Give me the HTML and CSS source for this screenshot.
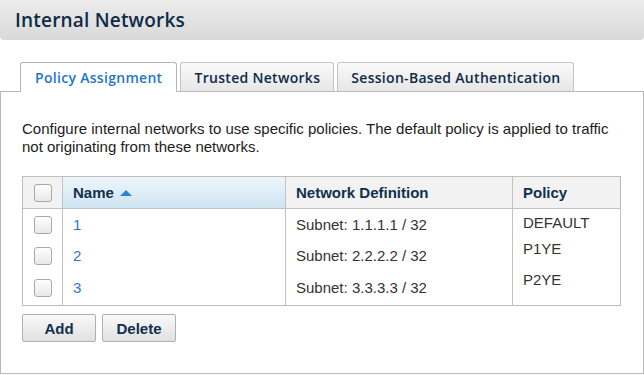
FILE: index.html
```html
<!DOCTYPE html>
<html lang="en">
<head>
    <meta charset="UTF-8">
    <meta name="viewport" content="width=device-width, initial-scale=1.0">
    <title>Internal Networks</title>
    <link rel="stylesheet" href="styles.css">
</head>
<body>
    <div class="page-header">
        <h1 class="page-title">Internal Networks</h1>
    </div>

    <div class="tabs">
        <div class="tab active">Policy Assignment</div>
        <div class="tab">Trusted Networks</div>
        <div class="tab">Session-Based Authentication</div>
    </div>

    <div class="panel">
        <p class="intro">Configure internal networks to use specific policies. The default policy is applied to traffic not originating from these networks.</p>

        <div class="grid">
            <div class="grid-row grid-head">
                <div class="cell col-check"><span class="checkbox"></span></div>
                <div class="cell sorted">Name <span class="sort-up"></span></div>
                <div class="cell">Network Definition</div>
                <div class="cell">Policy</div>
            </div>
            <div class="grid-row">
                <div class="cell col-check"><span class="checkbox"></span></div>
                <div class="cell"><a href="#">1</a></div>
                <div class="cell">Subnet: 1.1.1.1 / 32</div>
                <div class="cell policy">DEFAULT</div>
            </div>
            <div class="grid-row">
                <div class="cell col-check"><span class="checkbox"></span></div>
                <div class="cell"><a href="#">2</a></div>
                <div class="cell">Subnet: 2.2.2.2 / 32</div>
                <div class="cell policy">P1YE</div>
            </div>
            <div class="grid-row last">
                <div class="cell col-check"><span class="checkbox"></span></div>
                <div class="cell"><a href="#">3</a></div>
                <div class="cell">Subnet: 3.3.3.3 / 32</div>
                <div class="cell policy">P2YE</div>
            </div>
        </div>

        <div class="actions">
            <button class="btn">Add</button>
            <button class="btn">Delete</button>
        </div>
    </div>
</body>
</html>
```

FILE: styles.css
```css
html, body {
margin: 0;
padding: 0;
}

body {
font-family: "Liberation Sans", Arial, sans-serif;
font-size: 15px;
color: #222;
background-color: #fff;
width: 644px;
height: 375px;
overflow: hidden;
}

/* titre de la page */
.page-header {
height: 40px;
display: flex;
align-items: center;
padding-left: 15px;
background: linear-gradient(#ececec, #d9d9d9);
border-radius: 0 0 4px 4px;
}
.page-title {
margin: 0;
font-family: "Open Sans", "DejaVu Sans", sans-serif;
font-size: 19px;
font-weight: 600;
letter-spacing: 0.2px;
color: #0e2b47;
}

/* onglets */
.tabs {
display: flex;
gap: 3px;
margin-top: 22px;
padding-left: 20px;
position: relative;
z-index: 1;
}
.tab {
height: 28px;
display: flex;
align-items: center;
padding: 0 13px;
border: 1px solid #c4c4c4;
border-bottom: none;
border-radius: 3px 3px 0 0;
background: linear-gradient(#fafafa, #e6e6e6);
font-family: "Open Sans", "DejaVu Sans", sans-serif;
font-size: 14px;
font-weight: 600;
letter-spacing: 0.3px;
color: #0e2b47;
}
.tab.active {
height: 29px;
margin-bottom: -1px;
padding: 0 14px;
background: #fff;
color: #1f77c4;
border-color: #b4b4b4;
}

/* panneau principal */
.panel {
border: 1px solid #b8b8b8;
height: 283px;
box-sizing: border-box;
padding: 28px 21px 0;
}
.intro {
margin: 0 0 20px;
max-width: 590px;
line-height: 18px;
color: #1c1c1c;
}

/* tableau en grille */
.grid {
width: 597px;
border: 1px solid #bdbdbd;
}
.grid-row {
display: grid;
grid-template-columns: 40px 223px 227px 1fr;
height: 31px;
}
.grid-row.last {
height: 34px;
}
.grid-head {
border-bottom: 1px solid #c2c2c2;
background-color: #f2f2f2;
font-weight: bold;
color: #10304e;
}
.cell {
display: flex;
align-items: center;
padding: 0 10px;
line-height: 18px;
color: #333;
border-right: 1px solid #c2c2c2;
}
.grid-head .cell {
color: #10304e;
}
.cell:last-child {
border-right: none;
}
.cell.sorted {
background: linear-gradient(#edf6fb, #cfe4f1);
}
.cell.col-check {
justify-content: center;
padding: 0;
}
.cell.policy {
align-items: flex-start;
padding-top: 0;
}
.grid-row:nth-child(2) .policy {
padding-top: 5px;
}
.grid a {
color: #1f7ad0;
text-decoration: none;
}

.sort-up {
display: inline-block;
width: 0;
height: 0;
margin-left: 6px;
border-left: 6px solid transparent;
border-right: 6px solid transparent;
border-bottom: 6px solid #2a86d0;
}

.checkbox {
display: inline-block;
width: 16px;
height: 16px;
border: 1px solid #a9a9a9;
border-radius: 3px;
background: linear-gradient(#fdfdfd, #e9e9e9);
}

/* boutons */
.actions {
display: flex;
gap: 6px;
margin-top: 8px;
}
.btn {
width: 74px;
height: 28px;
border: 1px solid #b0b0b0;
border-radius: 2px;
background: linear-gradient(#f9f9f9, #e1e1e1);
font-family: "Liberation Sans", Arial, sans-serif;
font-size: 15px;
font-weight: bold;
color: #10304e;
cursor: pointer;
}
```
